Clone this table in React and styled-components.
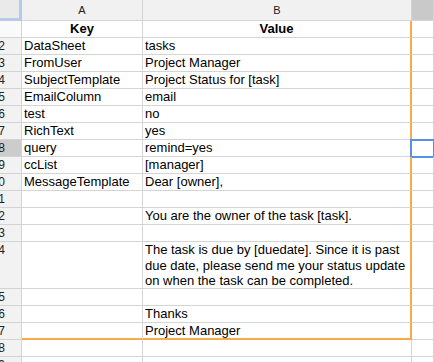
import React from 'react'
import styled, { createGlobalStyle, css } from 'styled-components'

const GlobalStyle = createGlobalStyle`
  html, body {
    margin: 0;
    padding: 0;
    background: #ffffff;
    overflow: hidden;
  }
  body {
    font-family: "Liberation Sans", Arial, sans-serif;
  }
`

const GRID = '#d4d4d4'
const RANGE = '#f7a94c'

const Sheet = styled.div`
  display: flex;
  flex-direction: column;
  width: 434px;
  height: 362px;
  overflow: hidden;
  font-family: "Liberation Sans", Arial, sans-serif;
  color: #000;
`

const Row = styled.div`
  display: flex;
  flex: none;
  height: ${({ $h }) => $h}px;
`

const Corner = styled.div`
  box-sizing: border-box;
  flex: none;
  width: 22px;
  background: #eaeaea;
  border-right: 3px solid #b7cbe8;
  border-bottom: 3px solid #b7cbe8;
`

const ColHead = styled.div`
  box-sizing: border-box;
  flex: ${({ $w }) => ($w ? `none` : '1')};
  width: ${({ $w }) => ($w ? `${$w}px` : 'auto')};
  background: ${({ $active }) => ($active ? '#c9c9c9' : '#f1f1f1')};
  border-right: 1px solid ${GRID};
  border-bottom: 1px solid ${GRID};
  font-size: 11px;
  color: #222;
  display: flex;
  align-items: center;
  justify-content: center;
`

const RowHead = styled.div`
  box-sizing: border-box;
  flex: none;
  width: 22px;
  background: ${({ $active, $light }) => ($active ? '#cccccc' : $light ? '#fafafa' : '#f2f2f2')};
  border-right: 1px solid ${GRID};
  border-bottom: 1px solid ${GRID};
  font-size: 12px;
  line-height: 16px;
  color: #222;
  overflow: hidden;
  white-space: nowrap;
  direction: rtl;
  padding-right: 16px;
  text-align: right;
`

const Cell = styled.div`
  position: relative;
  box-sizing: border-box;
  flex: ${({ $w }) => ($w ? 'none' : '1')};
  width: ${({ $w }) => ($w ? `${$w}px` : 'auto')};
  border-right: 1px solid ${GRID};
  border-bottom: 1px solid ${GRID};
  padding: 0 2px;
  font-size: 13px;
  line-height: ${({ $lh }) => $lh || 16}px;
  white-space: ${({ $wrap }) => ($wrap ? 'normal' : 'nowrap')};
  text-align: ${({ $center }) => ($center ? 'center' : 'left')};
  font-weight: ${({ $bold }) => ($bold ? 'bold' : 'normal')};
  overflow: visible;

  ${({ $edgeRight }) => $edgeRight && css`
    border-right: 2px solid ${RANGE};
  `}
  ${({ $edgeBottom }) => $edgeBottom && css`
    border-bottom: 2px solid ${RANGE};
  `}
`

const Selection = styled.div`
  position: absolute;
  left: -2px;
  top: -1px;
  right: -2px;
  bottom: -2px;
  border: 2px solid #5590ea;
  pointer-events: none;
`

const rows = [
  { key: 'Key', value: 'Value', header: true },
  { key: 'DataSheet', value: 'tasks' },
  { key: 'FromUser', value: 'Project Manager' },
  { key: 'SubjectTemplate', value: 'Project Status for [task]' },
  { key: 'EmailColumn', value: 'email' },
  { key: 'test', value: 'no' },
  { key: 'RichText', value: 'yes' },
  { key: 'query', value: 'remind=yes', selected: true },
  { key: 'ccList', value: '[manager]' },
  { key: 'MessageTemplate', value: 'Dear [owner],' },
  { key: '', value: '' },
  { key: '', value: 'You are the owner of the task [task].' },
  { key: '', value: '' },
  {
    key: '',
    value: 'The task is due by [duedate]. Since it is past due date, please send me your status update on when the task can be completed.',
    tall: true,
  },
  { key: '', value: '' },
  { key: '', value: 'Thanks' },
  { key: '', value: 'Project Manager' },
  { key: '', value: '', outside: true },
  { key: '', value: '', outside: true },
]

export default function App() {
  return (
    <Sheet>
      <GlobalStyle />
      <Row $h={21}>
        <Corner />
        <ColHead $w={121}>A</ColHead>
        <ColHead $w={269}>B</ColHead>
        <ColHead $active />
      </Row>
      {rows.map((r, i) => {
        const n = i + 1
        const last = n === 17
        return (
          <Row key={`row_${n}`} $h={r.tall ? 47 : 17}>
            <RowHead $active={r.selected} $light={r.header}>{r.header ? '' : n}</RowHead>
            <Cell $w={121} $center={r.header} $bold={r.header} $edgeBottom={last}>
              {r.key}
            </Cell>
            <Cell
              $w={269}
              $center={r.header}
              $bold={r.header}
              $wrap={r.tall}
              $lh={r.tall ? 15.5 : 16}
              $edgeRight={!r.outside}
              $edgeBottom={last}
            >
              {r.value}
            </Cell>
            <Cell>{r.selected && <Selection />}</Cell>
          </Row>
        )
      })}
    </Sheet>
  )
}
